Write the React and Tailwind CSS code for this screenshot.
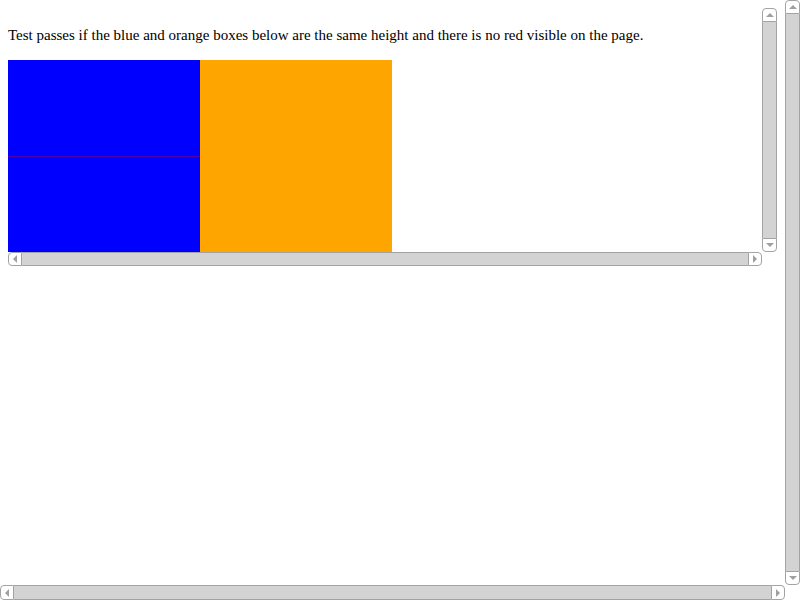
import React from 'react';

// Old-style disabled scrollbars, drawn by hand
function Arrow({ dir }) {
  const cls = {
    up: 'border-x-[4px] border-x-transparent border-b-[4px] border-b-[#a0a0a0]',
    down: 'border-x-[4px] border-x-transparent border-t-[4px] border-t-[#a0a0a0]',
    left: 'border-y-[4px] border-y-transparent border-r-[4px] border-r-[#a0a0a0]',
    right: 'border-y-[4px] border-y-transparent border-l-[4px] border-l-[#a0a0a0]',
  }[dir];
  return <div className={`w-0 h-0 ${cls}`} />;
}

function VScroll() {
  return (
    <div className="w-[15px] h-full flex flex-col">
      <div className="h-[14px] shrink-0 bg-white border border-[#a3a3a3] rounded-t-[4px] flex items-center justify-center">
        <Arrow dir="up" />
      </div>
      <div className="flex-1 bg-[#d3d3d3] border-x border-[#a3a3a3]" />
      <div className="h-[14px] shrink-0 bg-white border border-[#a3a3a3] rounded-b-[4px] flex items-center justify-center">
        <Arrow dir="down" />
      </div>
    </div>
  );
}

function HScroll() {
  return (
    <div className="h-full w-full flex">
      <div className="w-[14px] shrink-0 bg-white border border-[#a3a3a3] rounded-l-[4px] flex items-center justify-center">
        <Arrow dir="left" />
      </div>
      <div className="flex-1 bg-[#d3d3d3] border-y border-[#a3a3a3]" />
      <div className="w-[14px] shrink-0 bg-white border border-[#a3a3a3] rounded-r-[4px] flex items-center justify-center">
        <Arrow dir="right" />
      </div>
    </div>
  );
}

export default function App() {
  return (
    <div className="w-[800px] h-[600px] overflow-hidden bg-white grid grid-cols-[785px_15px] grid-rows-[585px_15px] font-['Liberation_Serif',serif] text-black">
      <div className="p-2">
        <div className="grid grid-cols-[754px_15px] grid-rows-[244px_14px]">
          <div className="overflow-hidden">
            <p className="mt-[18px] text-[15px] leading-[18px]">
              Test passes if the blue and orange boxes below are the same height and there is no red visible on the page.
            </p>
            <div className="mt-[16px] flex">
              <div className="w-[192px] h-[192px] bg-[#0000ff] flex flex-col">
                <div className="h-[96px]" />
                <div className="h-px bg-[#5000b0]" />
              </div>
              <div className="w-[192px] h-[192px] bg-[#ffa500]" />
            </div>
          </div>
          <VScroll />
          <HScroll />
          <div />
        </div>
      </div>
      <VScroll />
      <HScroll />
      <div />
    </div>
  );
}
